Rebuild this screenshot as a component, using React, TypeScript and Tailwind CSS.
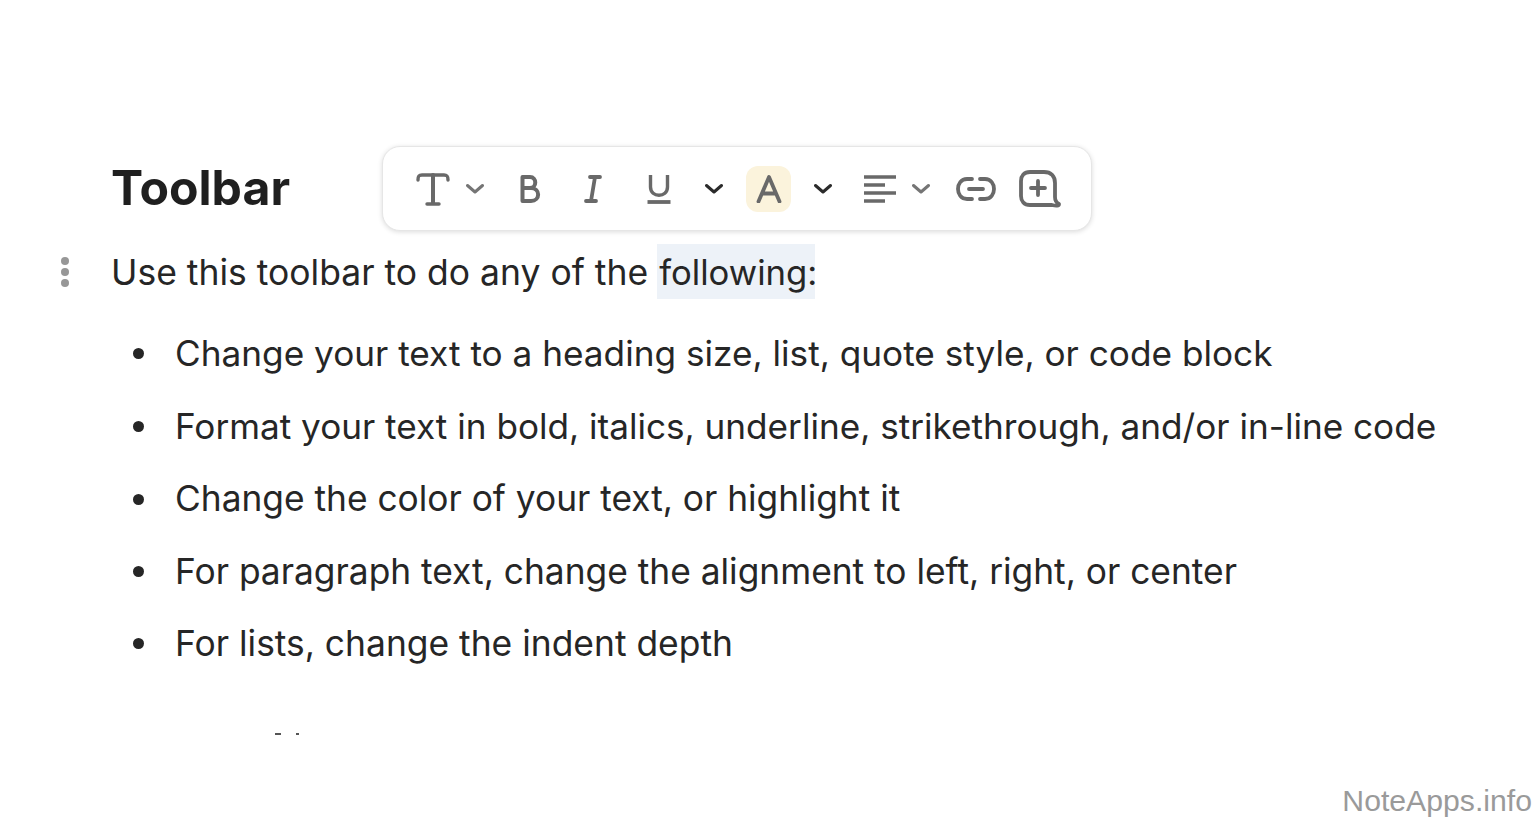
import React from "react";

const items = [
  { text: "Change your text to a heading size, list, quote style, or code block", size: "text-[35.2px]" },
  { text: "Format your text in bold, italics, underline, strikethrough, and/or in-line code", size: "text-[35.15px] pt-[2px]" },
  { text: "Change the color of your text, or highlight it", size: "text-[35.3px] pt-[2px]" },
  { text: "For paragraph text, change the alignment to left, right, or center", size: "text-[35.35px] pt-[2px]" },
  { text: "For lists, change the indent depth", size: "text-[35.4px]" },
];

function Chevron({ dark = false }: { dark?: boolean }) {
  return (
    <svg width="18" height="12" viewBox="0 0 18 12" fill="none" className={dark ? "text-[#2b2b2b]" : "text-[#757575]"}>
      <path d="M1.5 2.5 L9 9 L16.5 2.5" stroke="currentColor" strokeWidth="3" strokeLinecap="round" strokeLinejoin="round" />
    </svg>
  );
}

function Toolbar() {
  return (
    <div className="absolute left-[382px] top-[146px] flex h-[85px] w-[710px] items-center rounded-[18px] border border-[#e6e6e6] bg-white pl-[33px] shadow-[0_1px_5px_rgba(0,0,0,0.14)] text-[#696969]">
      <svg width="34" height="34" viewBox="0 0 34 34" fill="none" stroke="currentColor" strokeWidth="3.4" strokeLinecap="round" strokeLinejoin="round">
        <path d="M2 8 C2 4 3 3 6 3 H28 C31 3 32 4 32 8" />
        <path d="M17 3 V31" strokeWidth="4" />
        <path d="M11 32 H23" />
      </svg>
      <div className="ml-[16px] flex"><Chevron /></div>
      <svg className="ml-[36px]" width="21" height="28" viewBox="0 0 21 28" fill="none" stroke="currentColor" strokeWidth="4" strokeLinejoin="round">
        <path d="M2.5 2 H10 C17 2 17 13 10 13 H2.5 Z M2.5 13 H11 C20.5 13 20.5 26 11 26 H2.5 Z" />
      </svg>
      <svg className="ml-[43px]" width="18" height="28" viewBox="0 0 18 28" fill="none" stroke="currentColor" strokeWidth="3.8" strokeLinecap="round">
        <path d="M6 2 H16 M2 26 H12 M11 2 L7 26" />
      </svg>
      <svg className="ml-[45px]" width="24" height="30" viewBox="0 0 24 30" fill="none" stroke="currentColor" strokeWidth="3.4">
        <path d="M3.5 1 V13 C3.5 24 20.5 24 20.5 13 V1" />
        <path d="M0.5 28 H23.5" strokeWidth="3.8" />
      </svg>
      <div className="ml-[34px] flex"><Chevron dark /></div>
      <div className="ml-[23px] flex h-[46px] w-[45px] items-center justify-center rounded-[12px] bg-[#fbf3dc]">
        <svg width="26" height="28" viewBox="0 0 26 28" fill="none" stroke="currentColor" strokeWidth="3.8" strokeLinecap="round" strokeLinejoin="round">
          <path d="M2.5 26.5 L13 2 L23.5 26.5 M6.5 18.5 H19.5" />
        </svg>
      </div>
      <div className="ml-[23px] flex"><Chevron dark /></div>
      <svg className="ml-[32px]" width="32" height="28" viewBox="0 0 32 28" fill="none" stroke="currentColor" strokeWidth="3.6">
        <path d="M0 2 H32 M0 10 H21 M0 18 H32 M0 26 H21" />
      </svg>
      <div className="ml-[16px] flex"><Chevron /></div>
      <svg className="ml-[26px]" width="40" height="24" viewBox="0 0 40 24" fill="none" stroke="currentColor" strokeWidth="3.8" strokeLinecap="round">
        <path d="M16 2 H11 C-1 2 -1 22 11 22 H16 M24 2 H29 C41 2 41 22 29 22 H24 M13 12 H27" />
      </svg>
      <svg className="ml-[23px]" width="42" height="38" viewBox="0 0 42 38" fill="none" stroke="currentColor" strokeWidth="3.8" strokeLinecap="round" strokeLinejoin="round">
        <path d="M11 2 H25 C32 2 36 6 36 13 V27 C36 31 38 33 40 34 C40 36 37 36 33 35 H11 C5 35 2 31 2 26 V11 C2 6 5 2 11 2 Z" />
        <path d="M19 11 V25 M12 18 H26" />
      </svg>
    </div>
  );
}

export default function App() {
  return (
    <div className="relative h-[820px] w-full overflow-hidden bg-white font-['Inter',sans-serif] text-[#262626]">
      <div className="flex flex-col pl-[111px] pt-[157px]">
        <h1 className="text-[48.2px] leading-[62px] font-bold text-[#1f1f1f]">Toolbar</h1>
        <div className="relative mt-[25px] flex h-[55px] items-center">
          <span className="absolute left-[-50px] top-[13px] flex flex-col gap-[3px]">
            <span className="h-[8px] w-[8px] rounded-full bg-[#979797]" />
            <span className="h-[8px] w-[8px] rounded-full bg-[#979797]" />
            <span className="h-[8px] w-[8px] rounded-full bg-[#979797]" />
          </span>
          <span className="pt-[2px] text-[35.5px]">Use this toolbar to do any of the</span>
          <span className="ml-[9px] flex h-[55px] w-[158px] items-center whitespace-nowrap bg-[#edf2f8] pl-[2px] pt-[2px] text-[34.7px]">following:</span>
        </div>
        <ul className="mt-[18px] flex flex-col">
          {items.map((t) => (
            <li key={t.text} className={`flex h-[72.5px] items-center ${t.size}`}>
              <span className="ml-[22px] h-[11px] w-[11px] rounded-full bg-[#262626]" />
              <span className="ml-[31px] whitespace-nowrap">{t.text}</span>
            </li>
          ))}
        </ul>
        <div className="ml-[164px] mt-[53px] flex gap-[15px]">
          <span className="h-[2px] w-[6px] bg-[#555]" />
          <span className="h-[2px] w-[3px] bg-[#555]" />
        </div>
      </div>
      <Toolbar />
      <span className="absolute right-[2px] top-[783px] font-['Liberation_Sans',sans-serif] text-[30.2px] leading-[36px] text-[#9a9a9a]">NoteApps.info</span>
    </div>
  );
}
